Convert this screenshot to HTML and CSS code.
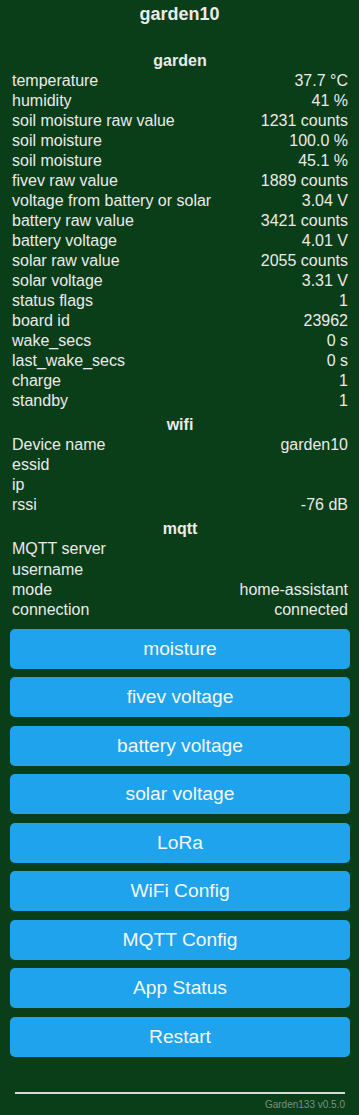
FILE: index.html
```html
<!DOCTYPE html>
<html>
<head>
<meta charset="utf-8">
<title>garden10</title>
<link rel="stylesheet" href="styles.css">
</head>
<body>
<div class="page">
  <h1 class="title">garden10</h1>
  <section class="section first">
    <h2 class="sec-head">garden</h2>
    <div class="row"><span>temperature</span><span>37.7 °C</span></div>
    <div class="row"><span>humidity</span><span>41 %</span></div>
    <div class="row"><span>soil moisture raw value</span><span>1231 counts</span></div>
    <div class="row"><span>soil moisture</span><span>100.0 %</span></div>
    <div class="row"><span>soil moisture</span><span>45.1 %</span></div>
    <div class="row"><span>fivev raw value</span><span>1889 counts</span></div>
    <div class="row"><span>voltage from battery or solar</span><span>3.04 V</span></div>
    <div class="row"><span>battery raw value</span><span>3421 counts</span></div>
    <div class="row"><span>battery voltage</span><span>4.01 V</span></div>
    <div class="row"><span>solar raw value</span><span>2055 counts</span></div>
    <div class="row"><span>solar voltage</span><span>3.31 V</span></div>
    <div class="row"><span>status flags</span><span>1</span></div>
    <div class="row"><span>board id</span><span>23962</span></div>
    <div class="row"><span>wake_secs</span><span>0 s</span></div>
    <div class="row"><span>last_wake_secs</span><span>0 s</span></div>
    <div class="row"><span>charge</span><span>1</span></div>
    <div class="row"><span>standby</span><span>1</span></div>
  </section>
  <section class="section">
    <h2 class="sec-head">wifi</h2>
    <div class="row"><span>Device name</span><span>garden10</span></div>
    <div class="row"><span>essid</span><span></span></div>
    <div class="row"><span>ip</span><span></span></div>
    <div class="row"><span>rssi</span><span>-76 dB</span></div>
  </section>
  <section class="section">
    <h2 class="sec-head">mqtt</h2>
    <div class="row"><span>MQTT server</span><span></span></div>
    <div class="row"><span>username</span><span></span></div>
    <div class="row"><span>mode</span><span>home-assistant</span></div>
    <div class="row"><span>connection</span><span>connected</span></div>
  </section>
  <nav class="buttons">
    <button class="btn">moisture</button>
    <button class="btn">fivev voltage</button>
    <button class="btn">battery voltage</button>
    <button class="btn">solar voltage</button>
    <button class="btn">LoRa</button>
    <button class="btn">WiFi Config</button>
    <button class="btn">MQTT Config</button>
    <button class="btn">App Status</button>
    <button class="btn">Restart</button>
  </nav>
  <footer class="footer">
    <div class="rule"></div>
    <div class="version">Garden133 v0.5.0</div>
  </footer>
</div>
</body>
</html>
```
FILE: styles.css
```css
html, body {
  margin: 0;
  padding: 0;
  background: #0a3e18;
}
body {
  font-family: "Liberation Sans", Arial, sans-serif;
  color: #eaeaea;
  font-size: 16px;
}
.page {
  display: flex;
  flex-direction: column;
  min-height: 1115px;
}
.title {
  margin: 0;
  padding-top: 3px;
  font-size: 18px;
  line-height: 22px;
  font-weight: bold;
  text-align: center;
}
.section {
  display: flex;
  flex-direction: column;
  padding: 0 11px 0 12px;
  margin-top: 4px;
}
.section.first {
  margin-top: 25.5px;
}
.sec-head {
  margin: 0;
  font-size: 16px;
  line-height: 20px;
  font-weight: bold;
  text-align: center;
}
.row {
  display: flex;
  justify-content: space-between;
  line-height: 20.05px;
  height: 20.05px;
}
.buttons {
  display: flex;
  flex-direction: column;
  gap: 8.5px;
  margin: 9px 9px 0 10px;
}
.btn {
  height: 40px;
  border: 0;
  border-radius: 5px;
  background: #1fa3ec;
  color: #f4f8fb;
  font-family: "Liberation Sans", Arial, sans-serif;
  font-size: 19.2px;
  padding: 0;
  cursor: pointer;
}
.footer {
  margin: 35px 14px 0 15px;
}
.rule {
  height: 2px;
  background: #d8d8d8;
}
.version {
  text-align: right;
  font-size: 10px;
  line-height: 12px;
  margin-top: 5px;
  color: #7d8f7f;
}
```
